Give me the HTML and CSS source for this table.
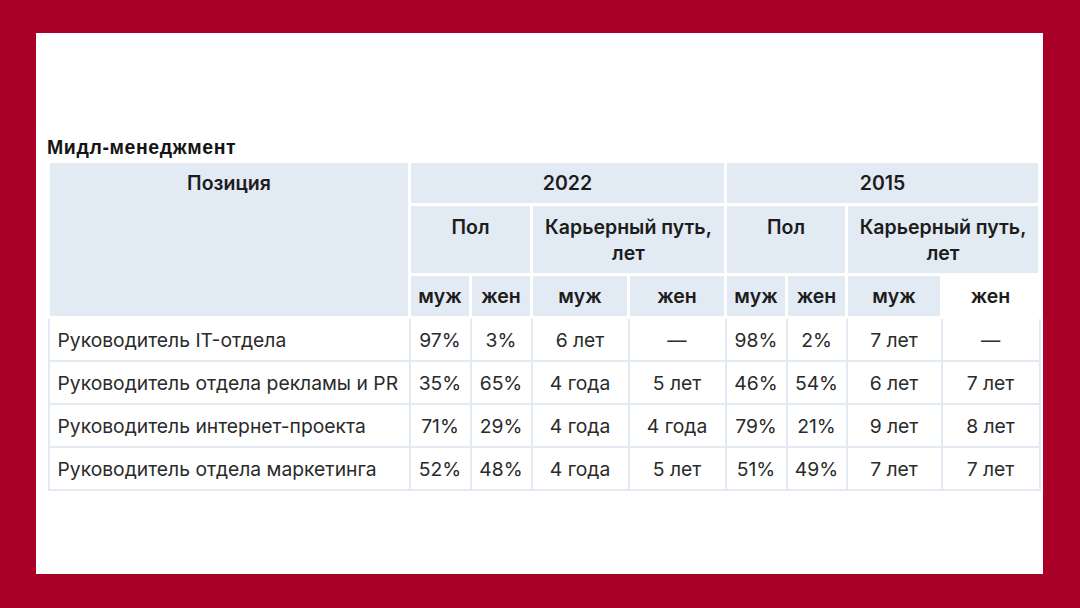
FILE: index.html
```html
<!DOCTYPE html>
<html lang="ru">
<head>
<meta charset="utf-8">
<title>Мидл-менеджмент</title>
<link rel="stylesheet" href="styles.css">
</head>
<body>
<div class="frame">
  <div class="sheet">
    <div class="title">Мидл-менеджмент</div>
    <table class="grid">
      <colgroup>
        <col class="c-pos">
        <col class="c-s1"><col class="c-s2"><col class="c-w1"><col class="c-w2">
        <col class="c-s1"><col class="c-s3"><col class="c-w3"><col class="c-w4">
      </colgroup>
      <thead>
        <tr>
          <th rowspan="3" class="pos">Позиция</th>
          <th colspan="4">2022</th>
          <th colspan="4">2015</th>
        </tr>
        <tr class="sub">
          <th colspan="2">Пол</th>
          <th colspan="2">Карьерный путь,<br>лет</th>
          <th colspan="2">Пол</th>
          <th colspan="2">Карьерный путь,<br>лет</th>
        </tr>
        <tr>
          <th>муж</th><th>жен</th><th>муж</th><th>жен</th>
          <th>муж</th><th>жен</th><th>муж</th><th class="plain">жен</th>
        </tr>
      </thead>
      <tbody>
        <tr>
          <td class="name">Руководитель IT-отдела</td>
          <td>97%</td><td>3%</td><td>6 лет</td><td>—</td>
          <td>98%</td><td>2%</td><td>7 лет</td><td>—</td>
        </tr>
        <tr>
          <td class="name">Руководитель отдела рекламы и PR</td>
          <td>35%</td><td>65%</td><td>4 года</td><td>5 лет</td>
          <td>46%</td><td>54%</td><td>6 лет</td><td>7 лет</td>
        </tr>
        <tr>
          <td class="name">Руководитель интернет-проекта</td>
          <td>71%</td><td>29%</td><td>4 года</td><td>4 года</td>
          <td>79%</td><td>21%</td><td>9 лет</td><td>8 лет</td>
        </tr>
        <tr>
          <td class="name">Руководитель отдела маркетинга</td>
          <td>52%</td><td>48%</td><td>4 года</td><td>5 лет</td>
          <td>51%</td><td>49%</td><td>7 лет</td><td>7 лет</td>
        </tr>
      </tbody>
    </table>
  </div>
</div>
</body>
</html>
```
FILE: styles.css
```css
html, body {
  margin: 0;
  padding: 0;
}
body {
  width: 1080px;
  height: 608px;
  overflow: hidden;
  font-family: Inter, "Liberation Sans", sans-serif;
}
.frame {
  box-sizing: border-box;
  width: 1080px;
  height: 608px;
  background: #a80026;
  padding: 33px 37px 34px 36px;
}
.sheet {
  box-sizing: border-box;
  height: 541px;
  background: #ffffff;
  padding: 104px 0 0 11px;
}
.title {
  font-family: "Liberation Sans", Arial, sans-serif;
  font-weight: 700;
  font-size: 19.5px;
  letter-spacing: 0.6px;
  line-height: 20px;
  color: #151515;
  margin-bottom: 3px;
}
.grid {
  border-collapse: collapse;
  table-layout: fixed;
  width: 993px;
}
.c-pos { width: 361px; }
.c-s1 { width: 61px; }
.c-s2 { width: 61px; }
.c-w1 { width: 97px; }
.c-w2 { width: 97px; }
.c-s3 { width: 60px; }
.c-w3 { width: 95px; }
.c-w4 { width: 98px; }

.grid th {
  background: #e2eaf4;
  border: 3px solid #ffffff;
  font-weight: 600;
  font-size: 19.5px;
  line-height: 26px;
  color: #1c1c1c;
  padding: 7px 2px;
  text-align: center;
  vertical-align: top;
  white-space: nowrap;
}
.grid .sub th {
  padding-top: 7.5px;
  padding-bottom: 7.5px;
}
.grid th.plain {
  background: #ffffff;
}
.grid td {
  border: 2px solid #e3eaf4;
  font-size: 19.3px;
  line-height: 25px;
  color: #2a2a2a;
  padding: 8.5px 2px 7.5px;
  text-align: center;
  white-space: nowrap;
}
.grid td.name {
  text-align: left;
  padding-left: 8px;
}
```
